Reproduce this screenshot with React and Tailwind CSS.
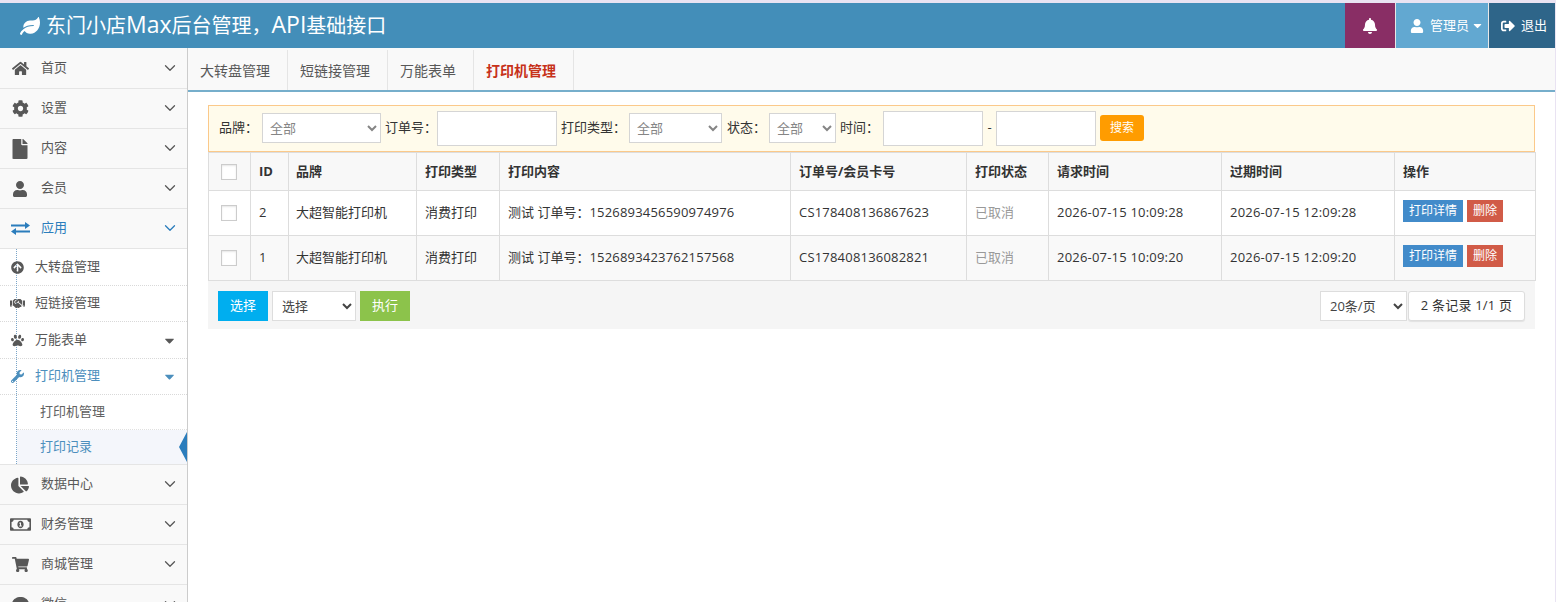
import {
  FaArrowCircleUp,
  FaBell,
  FaCaretDown,
  FaChartPie,
  FaCog,
  FaComment,
  FaFile,
  FaHandshake,
  FaHome,
  FaLeaf,
  FaPaw,
  FaRegMoneyBillAlt,
  FaShoppingCart,
  FaSignOutAlt,
  FaUser,
  FaWrench,
} from "react-icons/fa";
import { ChevronDown } from "lucide-react";

const font = "font-['Open_Sans','Noto_Sans_CJK_SC',sans-serif]";

const ExchangeIcon = () => (
  <svg width="19" height="13" viewBox="0 0 19 13" fill="currentColor">
    <path d="M0 2.5h14V0l5 3.5L14 7V4.5H0z" />
    <path d="M19 8.5H5V6L0 9.5 5 13v-2.5h14z" />
  </svg>
);

const NavItem = ({ icon: Icon, label, active, iconSize = 17 }) => (
  <div className={`h-10 shrink-0 flex items-center bg-[#f9f9f9] border-b border-[#e5e5e5] text-[13px] ${active ? "text-[#2b7dbc]" : "text-[#585858]"}`}>
    <span className="w-[41px] flex justify-center pr-px">
      <Icon size={iconSize} />
    </span>
    <span className="flex-1 -mt-[2px]">{label}</span>
    <ChevronDown size={18} strokeWidth={1.7} className="mr-[8px] -mt-[2px]" />
  </div>
);

const SubItem = ({ icon: Icon, label, h, caret, active, iconSize = 13 }) => (
  <div className={`${h} flex items-center border-b border-dotted border-[#d9d9d9] text-[13px] ${active ? "text-[#4c8fbd]" : "text-[#585858]"}`}>
    <span className="w-[35px] flex justify-center relative z-10">
      <Icon size={iconSize} />
    </span>
    <span className="flex-1 -mt-px">{label}</span>
    {caret && <FaCaretDown size={15} className="mr-[10px]" />}
  </div>
);

const Sidebar = () => (
  <aside className="w-[188px] shrink-0 border-r border-[#cccccc] flex flex-col overflow-hidden h-[554px] pt-px bg-[#f9f9f9]">
    <NavItem icon={FaHome} label="首页" />
    <NavItem icon={FaCog} label="设置" />
    <NavItem icon={FaFile} label="内容" iconSize={20} />
    <NavItem icon={FaUser} label="会员" iconSize={16} />
    <NavItem icon={ExchangeIcon} label="应用" active />
    <div className="relative bg-white">
      {/* dotted guide line */}
      <div className="absolute left-[16px] top-0 bottom-0 border-l border-dotted border-[#7aa5c8]" />
      <SubItem icon={FaArrowCircleUp} label="大转盘管理" h="h-[37px]" />
      <SubItem icon={FaHandshake} label="短链接管理" h="h-[36px]" iconSize={15} />
      <SubItem icon={FaPaw} label="万能表单" h="h-[37px]" caret />
      <SubItem icon={FaWrench} label="打印机管理" h="h-[36px]" caret active />
      <div className="h-[35px] ml-[17px] pl-[23px] flex items-center border-b border-dotted border-[#e0e0e0] text-[13px] text-[#616161]">
        打印机管理
      </div>
      <div className="relative h-[34px] ml-[17px] pl-[23px] pb-px flex items-center bg-[#f4f6fb] text-[13px] text-[#4c8fbd]">
        打印记录
        <svg className="absolute right-0 top-[2px]" width="8" height="30" viewBox="0 0 8 30">
          <path d="M8 0 L0 15 L8 30 Z" fill="#2b7dbc" />
        </svg>
      </div>
    </div>
    <div className="border-t border-[#e5e5e5]" />
    <NavItem icon={FaChartPie} label="数据中心" iconSize={18} />
    <NavItem icon={FaRegMoneyBillAlt} label="财务管理" iconSize={21} />
    <NavItem icon={FaShoppingCart} label="商城管理" />
    <NavItem icon={FaComment} label="微信" />
  </aside>
);

const tabs = [
  { label: "大转盘管理", w: "w-[100px]" },
  { label: "短链接管理", w: "w-[100px]" },
  { label: "万能表单", w: "w-[86px]" },
  { label: "打印机管理", w: "w-[100px]", active: true },
];

const rows = [
  {
    id: 2,
    orderNo: "1526893456590974976",
    order: "CS178408136867623",
    req: "2026-07-15 10:09:28",
    exp: "2026-07-15 12:09:28",
  },
  {
    id: 1,
    orderNo: "1526893423762157568",
    order: "CS178408136082821",
    req: "2026-07-15 10:09:20",
    exp: "2026-07-15 12:09:20",
  },
];

const Box = () => <span className="block ml-1 w-4 h-4 border border-[#cccccc] bg-white shadow-[inset_0_1px_2px_rgba(0,0,0,0.1)]" />;

const selectCls = "self-start mt-[7px] h-[30px] bg-white border border-[#d5d5d5] pl-[3px] text-[13px] text-[#858585]";
const inputCls = "self-start mt-[5px] h-[35px] bg-white border border-[#d5d5d5]";
const th = "border border-[#dddddd] px-2 text-left font-bold";
const td = "border border-[#dddddd] px-2";

const App = () => (
  <div className={`${font} w-full h-[602px] overflow-hidden bg-white border-t-[3px] border-r border-[#e9e3f2] text-[#333333]`}>
    <header className="h-[45px] bg-[#438eb9] flex items-center text-white">
      <div className="flex-1 flex items-center pl-5 gap-[6px] text-[20px]">
        <FaLeaf size={20} />
        <span className="-mt-[2px]">
          东门小店<span className="text-[23px]">Max</span>后台管理，<span className="text-[23px]">API</span>基础接口
        </span>
      </div>
      <div className="w-[50px] h-full bg-[#892e65] flex items-center justify-center">
        <FaBell size={16} />
      </div>
      <div className="w-[94px] h-full bg-[#62a8d1] border-x border-[#e8e8e8] flex items-center pl-[14px] text-[13px]">
        <FaUser size={14} className="mr-[6px]" />
        管理员
        <FaCaretDown size={13} className="ml-[2px]" />
      </div>
      <div className="w-[66px] h-full bg-[#2e6589] flex items-center pl-3 text-[13px] gap-[6px]">
        <FaSignOutAlt size={14} />
        退出
      </div>
    </header>

    <div className="flex">
      <Sidebar />
      <main className="flex-1 min-w-0">
        <nav className="h-[44px] bg-[#f9f9f9] border-b-2 border-[#76aecb] flex pt-[2px]">
          {tabs.map((tab) => (
            <div
              key={tab.label}
              className={`${tab.w} flex items-center pl-3 border-r border-[#e5e5e5] text-[14px] ${tab.active ? "font-bold text-[#c7321a]" : "text-[#585858]"}`}
            >
              {tab.label}
            </div>
          ))}
        </nav>

        <div className="px-5 pt-[13px]">
          <div className="h-[47px] bg-[#fffbeb] border border-[#fbc98a] flex items-center pl-[10px] pb-px text-[13px] text-[#333333]">
            <span className="w-[43px]">品牌：</span>
            <select className={`${selectCls} w-[119px]`} defaultValue="all">
              <option value="all">全部</option>
            </select>
            <span className="ml-1 w-[52px]">订单号：</span>
            <input className={`${inputCls} w-[120px]`} />
            <span className="ml-1 w-[68px]">打印类型：</span>
            <select className={`${selectCls} w-[93px]`} defaultValue="all">
              <option value="all">全部</option>
            </select>
            <span className="ml-[5px] w-[42px]">状态：</span>
            <select className={`${selectCls} w-[67px]`} defaultValue="all">
              <option value="all">全部</option>
            </select>
            <span className="ml-1 w-[43px]">时间：</span>
            <input className={`${inputCls} w-[100px]`} />
            <span className="w-[13px] text-center">-</span>
            <input className={`${inputCls} w-[100px]`} />
            <button className="self-start mt-[9px] ml-1 w-[44px] h-[26px] rounded-[3px] bg-[#ff9c00] text-white text-[12px]">搜索</button>
          </div>

          <table className="w-[1327px] table-fixed border-collapse text-[13px] text-[#333333]">
            <colgroup>
              <col className="w-[42px]" />
              <col className="w-[38px]" />
              <col className="w-[128px]" />
              <col className="w-[83px]" />
              <col className="w-[291px]" />
              <col className="w-[176px]" />
              <col className="w-[82px]" />
              <col className="w-[173px]" />
              <col className="w-[173px]" />
              <col className="w-[141px]" />
            </colgroup>
            <thead>
              <tr className="h-[38px] bg-[#f8f8f8]">
                <th className={th}>
                  <div className="pt-px">
                    <Box />
                  </div>
                </th>
                <th className={th}>ID</th>
                <th className={`${th} pl-[7px]`}>品牌</th>
                <th className={th}>打印类型</th>
                <th className={th}>打印内容</th>
                <th className={th}>订单号/会员卡号</th>
                <th className={th}>打印状态</th>
                <th className={th}>请求时间</th>
                <th className={th}>过期时间</th>
                <th className={th}>操作</th>
              </tr>
            </thead>
            <tbody>
              {rows.map((row, i) => (
                <tr key={row.id} className={`h-[45px] ${i % 2 ? "bg-[#f9f9f9]" : "bg-white"}`}>
                  <td className={td}>
                    <Box />
                  </td>
                  <td className={td}>{row.id}</td>
                  <td className={`${td} pl-[7px]`}>大超智能打印机</td>
                  <td className={td}>消费打印</td>
                  <td className={`${td} whitespace-nowrap`}>
                    测试 订单号：<span className="tracking-[0.2px]">{row.orderNo}</span>
                  </td>
                  <td className={`${td} tracking-[0.2px]`}>{row.order}</td>
                  <td className={`${td} text-[#999999]`}>已取消</td>
                  <td className={`${td} tracking-[0.2px]`}>{row.req}</td>
                  <td className={`${td} tracking-[0.2px]`}>{row.exp}</td>
                  <td className={td}>
                    <div className="flex gap-1 -mt-1">
                      <button className="w-[60px] h-[22px] bg-[#428bca] text-white text-[12px]">打印详情</button>
                      <button className="w-9 h-[22px] bg-[#d15b47] text-white text-[12px]">删除</button>
                    </div>
                  </td>
                </tr>
              ))}
            </tbody>
          </table>

          <div className="h-[48px] bg-[#f5f5f5] flex items-center justify-between px-[10px] pt-px text-[13px]">
            <div className="flex items-center gap-1">
              <button className="w-[50px] h-[30px] bg-[#00aeef] text-white">选择</button>
              <select className="w-[84px] h-[30px] bg-white border border-[#dddddd] pl-[5px] text-[#444444]" defaultValue="s">
                <option value="s">选择</option>
              </select>
              <button className="w-[50px] h-[30px] bg-[#8cc34b] text-white">执行</button>
            </div>
            <div className="flex items-center gap-[1px]">
              <select className="w-[87px] h-[30px] bg-white border border-[#dddddd] pl-[5px] text-[#444444]" defaultValue="20">
                <option value="20">20条/页</option>
              </select>
              <div className="w-[117px] h-[30px] bg-white border border-[#dddddd] rounded-[3px] shadow-[0_1px_1px_rgba(0,0,0,0.08)] tracking-[0.2px] flex items-center justify-center">
                2 条记录 1/1 页
              </div>
            </div>
          </div>
        </div>
      </main>
    </div>
  </div>
);

export default App;
